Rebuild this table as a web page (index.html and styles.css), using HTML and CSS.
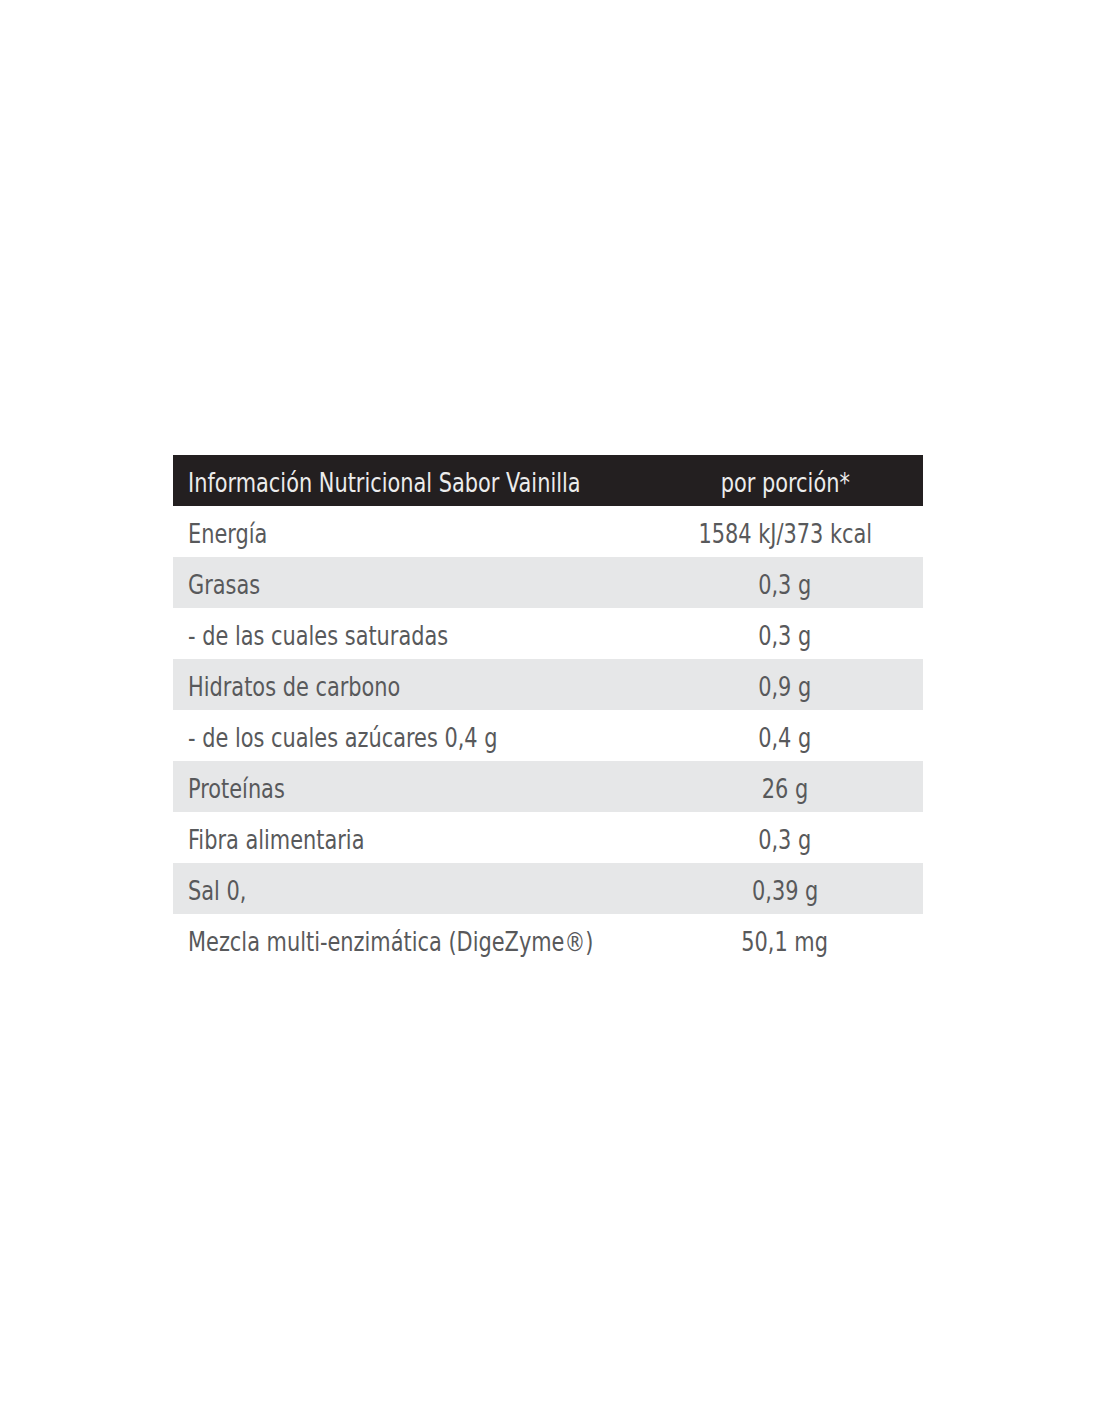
FILE: index.html
```html
<!DOCTYPE html>
<html lang="es">
<head>
<meta charset="utf-8">
<title>Información Nutricional</title>
<link rel="stylesheet" href="styles.css">
</head>
<body>
<div class="page">
  <table class="nutri">
    <thead>
      <tr><th class="name"><span class="t">Información Nutricional Sabor Vainilla</span></th><th class="val"><span class="t">por porción*</span></th></tr>
    </thead>
    <tbody>
      <tr><td class="name"><span class="t">Energía</span></td><td class="val"><span class="t">1584 kJ/373 kcal</span></td></tr>
      <tr class="alt"><td class="name"><span class="t">Grasas</span></td><td class="val"><span class="t">0,3 g</span></td></tr>
      <tr><td class="name"><span class="t">- de las cuales saturadas</span></td><td class="val"><span class="t">0,3 g</span></td></tr>
      <tr class="alt"><td class="name"><span class="t">Hidratos de carbono</span></td><td class="val"><span class="t">0,9 g</span></td></tr>
      <tr><td class="name"><span class="t">- de los cuales azúcares 0,4 g</span></td><td class="val"><span class="t">0,4 g</span></td></tr>
      <tr class="alt"><td class="name"><span class="t">Proteínas</span></td><td class="val"><span class="t">26 g</span></td></tr>
      <tr><td class="name"><span class="t">Fibra alimentaria</span></td><td class="val"><span class="t">0,3 g</span></td></tr>
      <tr class="alt"><td class="name"><span class="t">Sal 0,</span></td><td class="val"><span class="t">0,39 g</span></td></tr>
      <tr><td class="name"><span class="t">Mezcla multi-enzimática (DigeZyme®)</span></td><td class="val"><span class="t">50,1 mg</span></td></tr>
    </tbody>
  </table>
</div>
</body>
</html>
```
FILE: styles.css
```css
html, body {
  margin: 0;
  padding: 0;
  background: #ffffff;
}
.page {
  width: 1100px;
  height: 1422px;
  padding-top: 455px;
  padding-left: 173px;
  box-sizing: border-box;
}
.nutri {
  width: 750px;
  border-collapse: collapse;
  font-family: "DejaVu Sans Condensed", "Liberation Sans Narrow", sans-serif;
  font-size: 26px;
  color: #58595b;
  table-layout: fixed;
}
.nutri th, .nutri td {
  height: 51px;
  padding: 0;
  vertical-align: middle;
  font-weight: normal;
  white-space: nowrap;
}
.nutri thead tr {
  background: #231f20;
  color: #ececec;
}
.nutri .name {
  text-align: left;
  padding-left: 15px;
}
.nutri .val {
  width: 276px;
  text-align: center;
}
.nutri .alt {
  background: #e6e7e8;
}
.t {
  display: inline-block;
  transform: translateY(2px) scaleX(0.893);
  transform-origin: left center;
}
.val .t {
  transform-origin: center center;
}
```
